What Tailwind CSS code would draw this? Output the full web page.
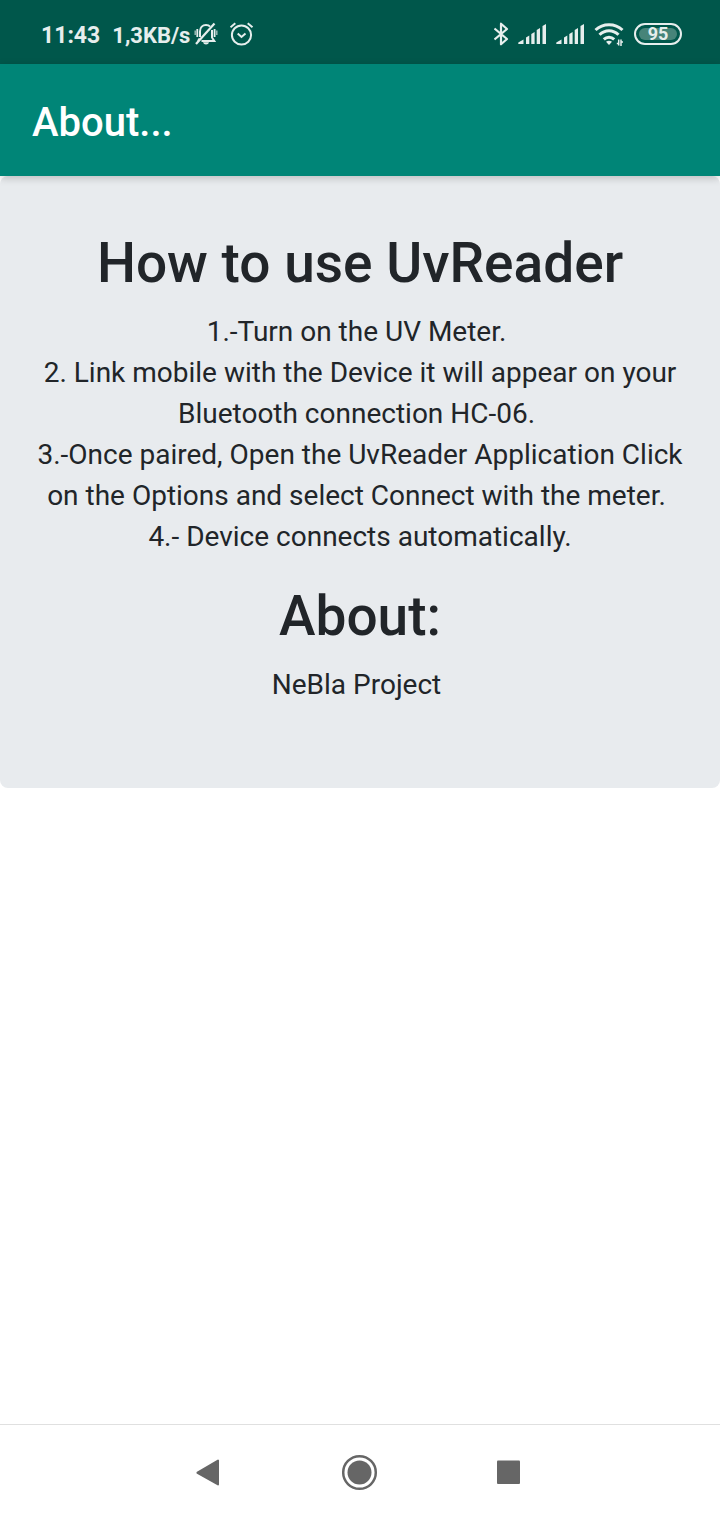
<!DOCTYPE html>
<html lang="en">
<head>
<meta charset="utf-8">
<meta name="viewport" content="width=device-width, initial-scale=1">
<title>About...</title>
<script src="https://cdn.jsdelivr.net/npm/@tailwindcss/browser@4"></script>
</head>
<body class="flex min-h-screen flex-col bg-white font-['Roboto',sans-serif] text-[#212529]">
  <div class="flex h-16 items-center justify-between bg-[#00574b] pt-1 pr-[38px] pl-[41px] text-[#e6eeed]">
    <div class="flex items-center">
      <span class="pt-1 text-[23px] leading-8 font-bold">11:43</span>
      <span class="ml-3 pt-1 text-[22px] leading-8 font-bold">1,3KB/s</span>
      <svg class="ml-1 size-6" viewBox="0 0 24 24" fill="none" stroke="currentColor" stroke-width="2" aria-label="Muted">
        <path d="M6 15V9.500C6 5.500 8.600 3 12 3c1.800 0 3.200.6 4.100 1.700M18 8v7.500l2.300 3.500H7.500M5.600 16.500L4 19"/>
        <path d="M2 22L20.500 1.500" stroke-width="2.200"/>
        <path d="M9 20.200h6c-.5 1.600-1.500 2.200-3 2.200s-2.500-.6-3-2.200z" fill="currentColor" stroke="none"/>
        <path d="M3.300 7v8M20.600 7v8" stroke-width="1.800"/><path d="M1.200 8.500v4.500M22.800 8.500v4.500" stroke-width="1.400" opacity=".7"/>
      </svg>
      <svg class="ml-3 size-6" viewBox="0 0 24 24" fill="none" stroke="currentColor" stroke-width="2" aria-label="Alarm">
        <circle cx="11.500" cy="13" r="9.600"/><path d="M7.700 11.500l3.800 3.500 4-3.500M.5 5.300L5.300 1.300M22.500 5.300L17.700 1.300"/>
      </svg>
    </div>
    <div class="flex items-center">
      <svg class="h-6 w-4" viewBox="0 0 16 24" fill="none" stroke="currentColor" stroke-width="2.200" stroke-linejoin="round" aria-label="Bluetooth">
        <path d="M.5 6.500L13 17l-6 5.300V1.700L13 7 .5 17.500"/>
      </svg>
      <svg class="ml-2 h-6 w-[30px]" viewBox="0 0 30 24" fill="currentColor" aria-label="Signal">
        <path d="M.3 22v-1.500L5.500 17.500V22zM8 15.500l3.300-2V22H8zM13.300 12l3.300-2v12h-3.300zM18.700 8l3.300-2v16h-3.300zM24.500 4L28 2v20h-3.500z"/>
      </svg>
      <svg class="ml-2 h-6 w-[30px]" viewBox="0 0 30 24" fill="currentColor" aria-label="Signal">
        <path d="M.3 22v-1.500L5.500 17.500V22zM8 15.500l3.300-2V22H8zM13.300 12l3.300-2v12h-3.300zM18.700 8l3.300-2v16h-3.300zM24.500 4L28 2v20h-3.500z"/>
      </svg>
      <svg class="ml-2 h-6 w-[30px]" viewBox="0 0 30 24" fill="none" stroke="currentColor" stroke-width="3" aria-label="Wi-Fi">
        <path d="M1.500 8C9 1 21 1 28.500 8M5.500 12.800c5.500-5.500 13.500-5.500 19 0M9.800 17.300c3-2.800 7.400-2.800 10.400 0"/>
        <path d="M12 19.800q3-2.300 6 0L15 23z" fill="currentColor" stroke="none"/>
        <path d="M24.700 17.500v6M22.800 21.500h2M27 24v-6.500M27 20h2" stroke-width="1.500"/>
      </svg>
      <div class="ml-[10px] flex h-[22px] w-12 rounded-full border-2 border-current p-[3px]">
        <div class="flex flex-1 items-center justify-center rounded-md bg-[#478479] text-[18px] leading-4 font-bold">95</div>
      </div>
    </div>
  </div>
  <header class="relative flex h-28 items-center bg-[#008577] px-8 pt-1 shadow-[0_2px_8px_rgba(0,0,0,0.2)]">
    <h1 class="pt-0.5 text-[40px] leading-12 font-medium text-white">About...</h1>
  </header>
  <main class="flex-1">
    <section class="rounded-lg bg-[#e8ebee] px-8 pt-[54px] pb-[83px] text-center">
      <h2 class="mb-[14px] text-[55px] leading-[67px] font-medium">How to use UvReader</h2>
      <p class="mb-[26px] text-[28px] leading-[41px]">1.-Turn on the UV Meter.&nbsp;<br>2. Link mobile with the Device it will appear on your Bluetooth connection HC-06.&nbsp;<br>3.-Once paired, Open the UvReader Application Click on the Options and select Connect with the meter.&nbsp;<br>4.- Device connects automatically.</p>
      <h2 class="mb-[14px] text-[55px] leading-[67px] font-medium">About:</h2>
      <p class="text-[28px] leading-[41px]">NeBla Project&nbsp;</p>
    </section>
  </main>
  <nav class="flex h-24 justify-center border-t border-[#e0e0e0] text-[#666]">
    <button class="flex w-[150px] items-center justify-center" aria-label="Back">
      <svg class="size-10" viewBox="0 0 40 40"><path d="M7.500 19.500L28 7.500v24L7.500 20z" fill="currentColor" stroke="currentColor" stroke-width="2" stroke-linejoin="round"/></svg>
    </button>
    <button class="flex w-[150px] items-center justify-center" aria-label="Home">
      <svg class="size-10" viewBox="0 0 40 40"><circle cx="19.500" cy="19.500" r="16.300" fill="none" stroke="currentColor" stroke-width="2.500"/><circle cx="19.500" cy="19.500" r="12" fill="currentColor"/></svg>
    </button>
    <button class="flex w-[150px] items-center justify-center" aria-label="Recent apps">
      <svg class="size-10" viewBox="0 0 40 40"><rect x="7" y="7.500" width="23" height="23.500" rx="1" fill="currentColor"/></svg>
    </button>
  </nav>
</body>
</html>
